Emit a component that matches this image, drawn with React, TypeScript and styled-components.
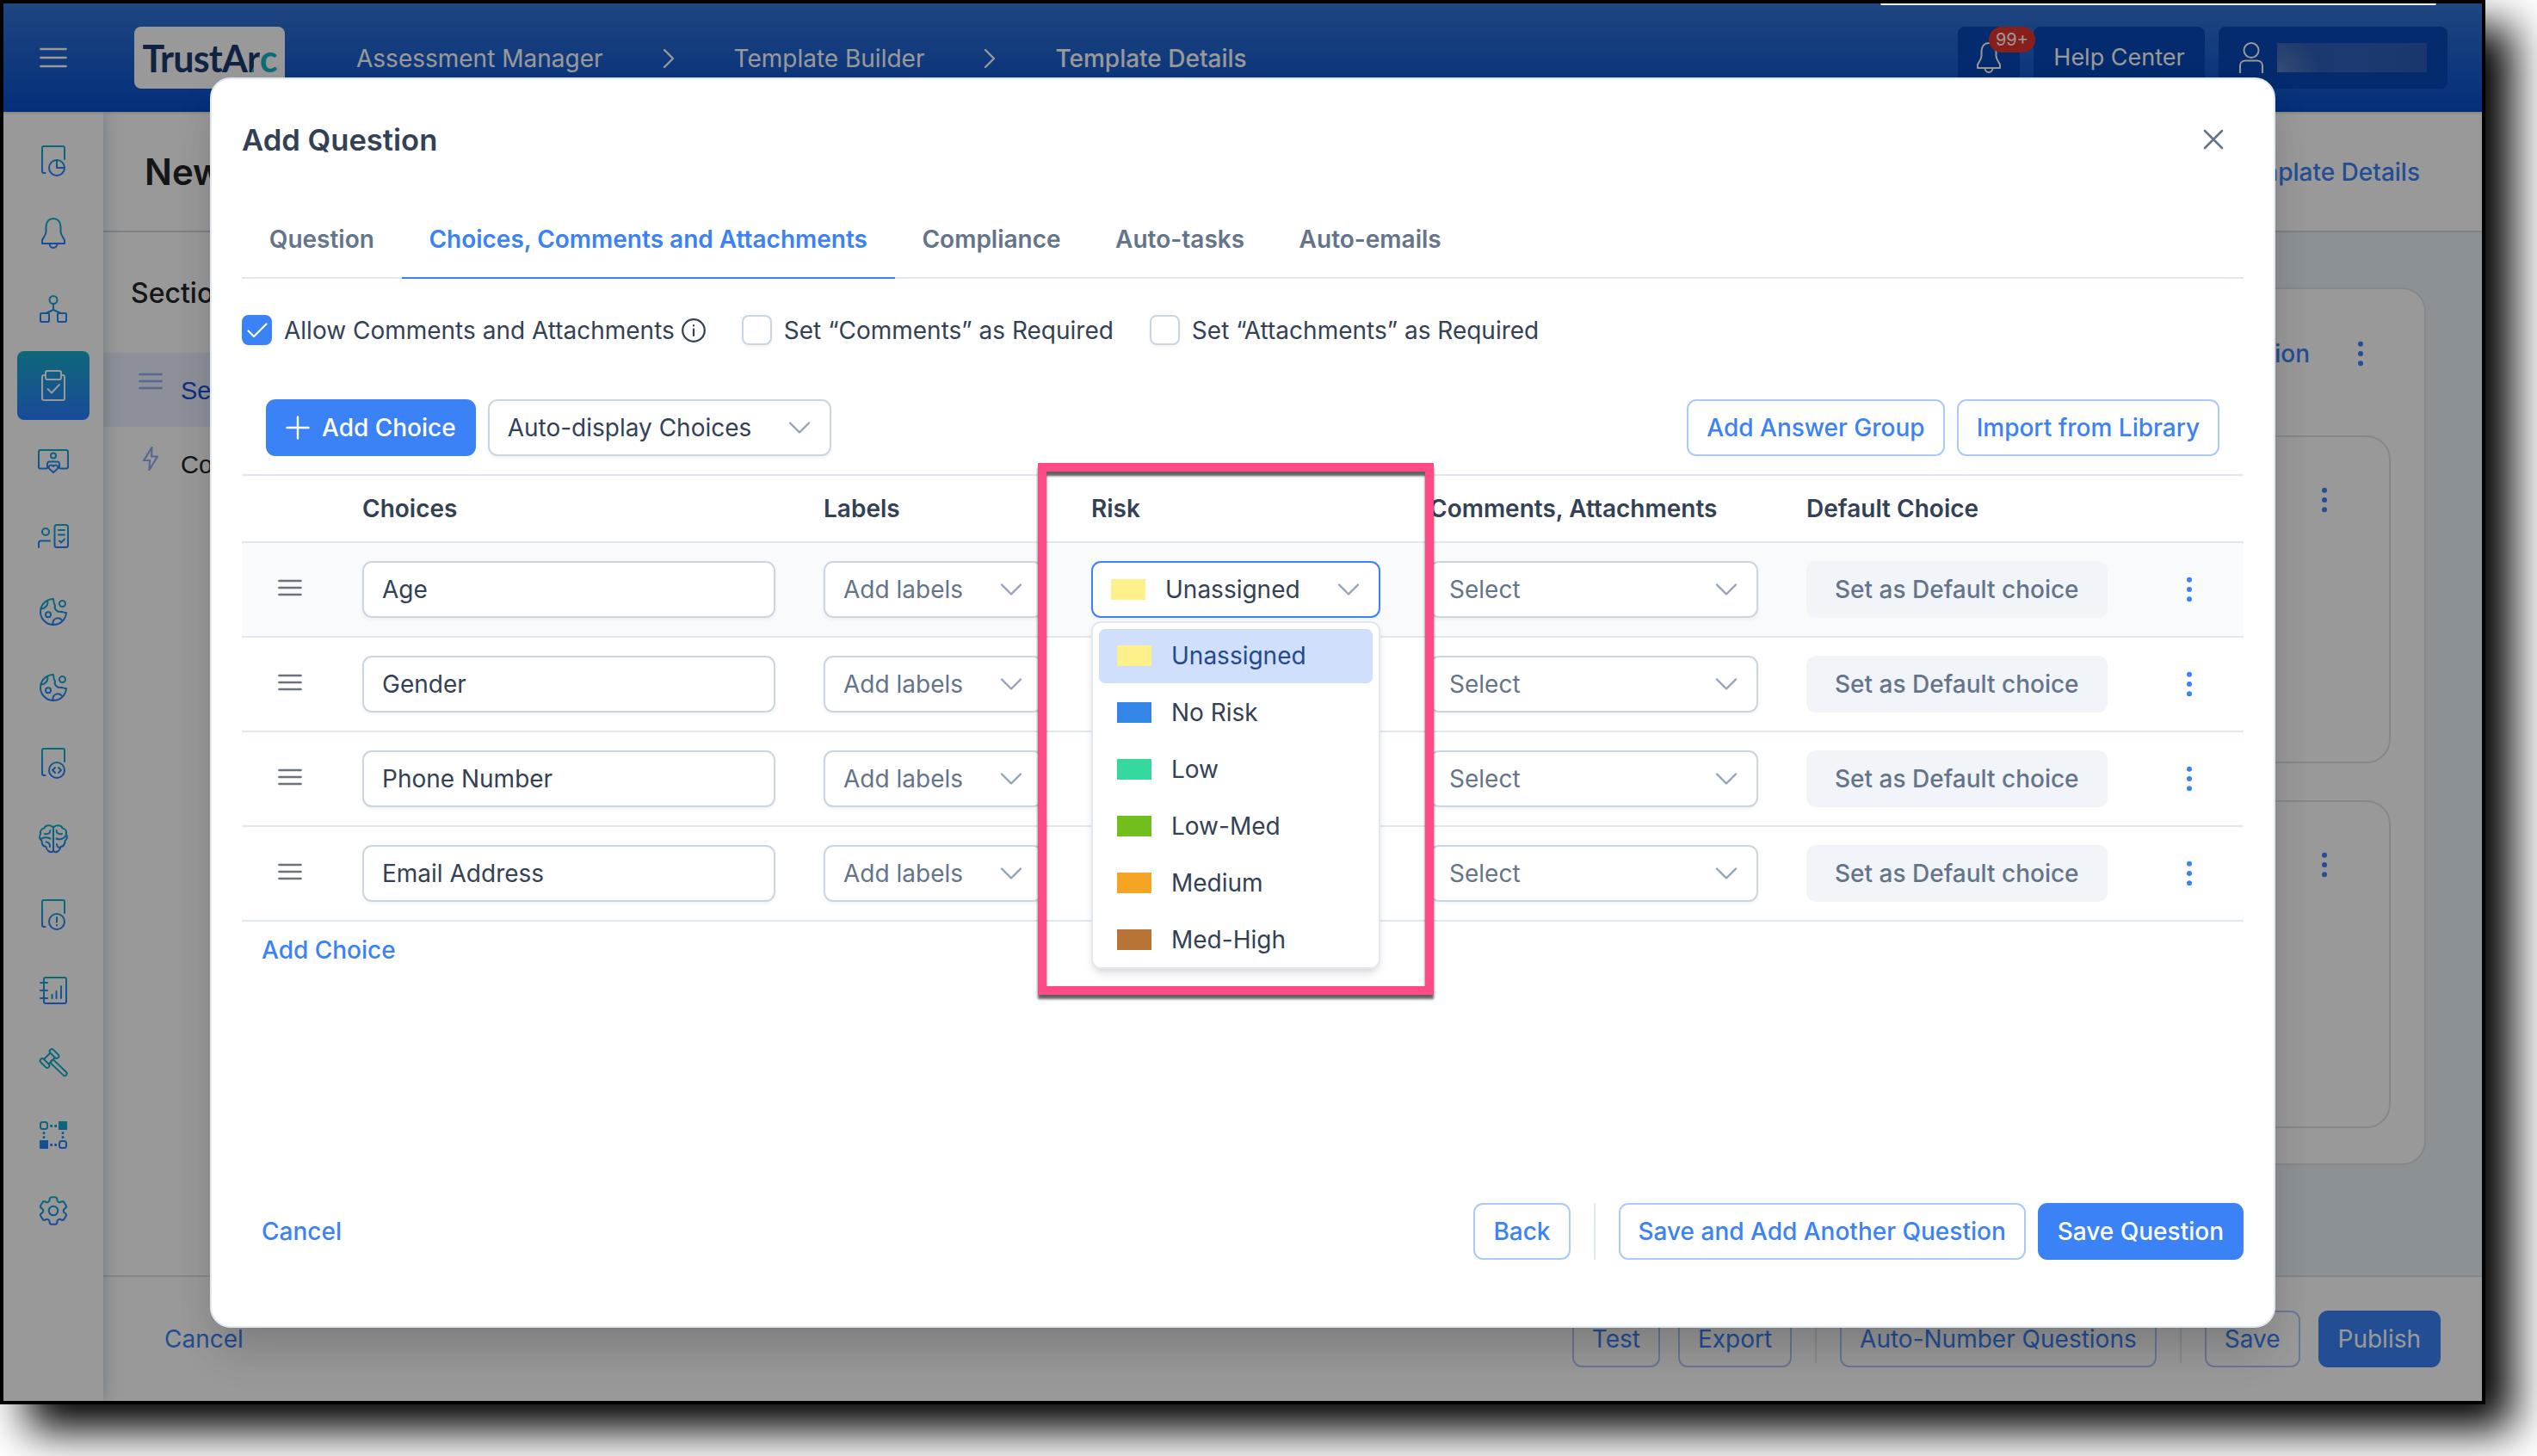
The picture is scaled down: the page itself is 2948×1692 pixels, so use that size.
import React, { useState } from "react";
import styled, { createGlobalStyle, css } from "styled-components";
import { HiOutlineCog6Tooth } from "react-icons/hi2";

const GlobalStyle = createGlobalStyle`
  * {
    box-sizing: border-box;
  }

  body {
    margin: 0;
    min-height: 1692px;
    background: #fff;
    font-family: "Inter", "Liberation Sans", sans-serif;
    font-size: 28px;
    line-height: 34px;
    color: #334155;
  }

  button {
    font: inherit;
    margin: 0;
    cursor: pointer;
  }
`;

// Window frame
const Window = styled.div`
  position: relative;
  width: 2888px;
  height: 1632px;
  border: 4px solid #000;
  box-shadow: 32px 30px 48px #000;
`;

const Shell = styled.div`
  display: flex;
  flex-direction: column;
  height: 100%;
  overflow: hidden;
  background: #fff;
`;

const TabEdge = styled.div`
  position: absolute;
  z-index: 4;
  top: 0;
  left: 2181px;
  width: 646px;
  height: 2px;
  background: #f4f6f8;
  border-radius: 0 0 12px 12px;
`;

// Top bar
const TopBar = styled.header`
  position: relative;
  z-index: 2;
  display: flex;
  align-items: center;
  flex: none;
  height: 126px;
  padding: 0 40px 0 42px;
  background: linear-gradient(#3475d6, #074ecb);
  color: #fff;
  box-shadow: 0 2px 2px rgba(0, 0, 0, 0.12);
`;

const Logo = styled.div`
  display: flex;
  justify-content: center;
  align-items: center;
  width: 175px;
  height: 72px;
  margin-left: 78px;
  padding-top: 2px;
  border-radius: 8px;
  background: #fff;
  color: #1b3b70;
  font-family: "Lato", "Noto Sans", sans-serif;
  font-size: 43px;
  font-weight: 700;
  line-height: 50px;
  letter-spacing: -0.8px;
`;

const LogoR = styled.span`
  background: linear-gradient(115deg, #1b3b70 62%, #14b4c4 63%);
  background-clip: text;
  color: transparent;
`;

const LogoC = styled.span`
  color: #14b4c4;
`;

const Breadcrumb = styled.nav`
  display: flex;
  align-items: center;
  margin-left: 83px;
  padding-top: 1px;
`;

const Spacer = styled.span`
  display: flex;
  justify-content: center;
  width: 152px;
`;

const Crumb = styled.span<{ $current?: boolean }>`
  font-weight: ${(p) => (p.$current ? 500 : 400)};
`;

const TopActions = styled.div`
  display: flex;
  gap: 16px;
  margin-left: auto;
`;

const TopButton = styled.div<{ $width: number }>`
  position: relative;
  display: flex;
  align-items: center;
  justify-content: center;
  width: ${(p) => p.$width}px;
  height: 72px;
  border-radius: 8px;
  background: #0648b6;
  font-size: 27px;
`;

const UserButton = styled(TopButton)`
  padding-right: 4px;
`;

const Badge = styled.span`
  position: absolute;
  top: 0;
  left: 36px;
  z-index: 1;
  width: 54px;
  height: 30px;
  border-radius: 15px;
  background: #e5342c;
  font-size: 20px;
  line-height: 30px;
  text-align: center;
`;

const Redacted = styled.div`
  width: 174px;
  height: 34px;
  margin-left: 12px;
  background:
    radial-gradient(circle at 0 100%, rgba(255, 255, 255, 0.22), transparent 50px),
    linear-gradient(90deg, #2a5cb4, #2f62bd 50%, #2a5cb4);
`;

// Page body
const Body = styled.div`
  display: flex;
  flex: 1;
  min-height: 0;
`;

const Sidebar = styled.aside`
  position: relative;
  z-index: 1;
  display: flex;
  flex-direction: column;
  align-items: center;
  flex: none;
  width: 116px;
  padding-top: 9px;
  background: #fff;
  box-shadow: 0 0 20px rgba(60, 100, 130, 0.35);
`;

const NavItem = styled.div<{ $active?: boolean; $gap?: number }>`
  display: flex;
  align-items: center;
  justify-content: center;
  flex: none;
  width: 84px;
  height: 80px;
  margin-top: ${(p) => p.$gap ?? 8}px;
  border-radius: 8px;
  background: ${(p) => (p.$active ? "linear-gradient(#19accb, #2b7dff)" : "none")};
`;

const Main = styled.main`
  display: flex;
  flex-direction: column;
  flex: 1;
  min-width: 0;
`;

const PageHead = styled.div`
  display: flex;
  align-items: center;
  justify-content: space-between;
  flex: none;
  height: 140px;
  padding: 2px 72px 0 48px;
  border-bottom: 2px solid #d4d6de;
`;

const PageTitle = styled.h1`
  margin: 0;
  font-size: 42px;
  font-weight: 600;
  line-height: 50px;
  color: #222529;
`;

const PageLink = styled.a`
  font-weight: 500;
  color: #3b82f6;
`;

const Content = styled.div`
  display: flex;
  flex: 1;
  min-height: 0;
`;

const SectionPanel = styled.div`
  flex: none;
  width: 600px;
`;

const SectionTitle = styled.div`
  height: 140px;
  padding: 54px 32px 0;
  font-size: 32px;
  font-weight: 500;
  color: #222529;
`;

const SectionRow = styled.div<{ $active?: boolean }>`
  display: flex;
  height: 86px;
  padding: 23px 41px 0;
  background: ${(p) => (p.$active ? "#ebf1fd" : "none")};
  color: ${(p) => (p.$active ? "#1d4ed8" : "#222529")};
  font-family: "Liberation Sans", sans-serif;
  font-size: 29px;
  line-height: 42px;
`;

const SectionIcon = styled.span`
  width: 49px;
  line-height: 0;
`;

const Canvas = styled.div`
  flex: 1;
  padding: 64px 65px 129px 0;
  background: #e8f2f8;
`;

const Card = styled.div`
  height: 1020px;
  padding: 0 39px;
  border: 2px solid #dde3ea;
  border-radius: 28px;
  background: #fff;
`;

const CardHead = styled.div`
  display: flex;
  justify-content: flex-end;
  align-items: center;
  gap: 45px;
  height: 150px;
  margin-bottom: 20px;
  padding-right: 21px;
`;

const InnerCard = styled.div`
  display: flex;
  justify-content: flex-end;
  height: 381px;
  margin-bottom: 43px;
  padding: 58px 61px 0;
  border: 2px solid #dde3ea;
  border-radius: 28px;
`;

const PageFooter = styled.footer`
  display: flex;
  align-items: center;
  flex: none;
  height: 146px;
  padding: 0 48px;
  border-top: 2px solid #dfdfe0;
`;

// Buttons
const Button = styled.button<{ $kind?: "solid" | "outline" | "text" | "muted"; $light?: boolean }>`
  display: inline-flex;
  align-items: center;
  gap: 14px;
  height: 66px;
  padding: 0 21px;
  border: 2px solid transparent;
  border-radius: 11px;
  background: transparent;
  color: #3b82f6;
  font-weight: ${(p) => (p.$light ? 400 : 500)};
  white-space: nowrap;

  ${(p) =>
    p.$kind === "solid" &&
    css`
      background: #3b82f6;
      border-color: #3b82f6;
      color: #fff;
    `}

  ${(p) =>
    p.$kind === "outline" &&
    css`
      border-color: #abc9fb;
    `}

  ${(p) =>
    p.$kind === "muted" &&
    css`
      padding: 0 31px;
      background: #f1f5f9;
      border-color: #f1f5f9;
      color: #64748b;
    `}
`;

const ButtonGroup = styled.div<{ $gap: number }>`
  display: flex;
  align-items: center;
  gap: ${(p) => p.$gap}px;
  margin-left: auto;
`;

const Divider = styled.span<{ $space: number; $height: number }>`
  align-self: flex-start;
  width: 2px;
  height: ${(p) => p.$height}px;
  margin: 0 ${(p) => p.$space}px;
  background: #e2e8f0;
`;

// Modal
const Overlay = styled.div`
  position: absolute;
  inset: 0;
  z-index: 3;
  display: flex;
  justify-content: center;
  align-items: flex-start;
  padding-top: 86px;
  background: rgba(0, 0, 0, 0.4);
`;

const Modal = styled.section`
  display: flex;
  flex-direction: column;
  width: 2400px;
  height: 1453px;
  padding: 35px 35px 77px;
  border: 2px solid #e2e8f0;
  border-radius: 24px;
  background: #fff;
  box-shadow:
    0 40px 50px -10px rgba(0, 0, 0, 0.1),
    0 16px 50px -8px rgba(0, 0, 0, 0.12);
`;

const ModalHead = styled.div`
  display: flex;
  justify-content: space-between;
  align-items: center;
  height: 70px;
  padding-right: 21px;
`;

const ModalTitle = styled.h2`
  margin: 0;
  font-size: 34.6px;
  font-weight: 600;
  line-height: 42px;
`;

const Tabs = styled.div`
  display: flex;
  height: 92px;
  margin-top: 35px;
  border-bottom: 2px solid #e2e8f0;
`;

const Tab = styled.button<{ $active?: boolean }>`
  height: 92px;
  padding: 1px 31.75px 0;
  border: 0;
  border-bottom: 2px solid ${(p) => (p.$active ? "#3b82f6" : "transparent")};
  background: none;
  color: ${(p) => (p.$active ? "#3b82f6" : "#64748b")};
  font-weight: 600;
  white-space: nowrap;
`;

const Options = styled.div`
  display: flex;
  align-items: center;
  gap: 42px;
  height: 35px;
  margin-top: 42px;
`;

const Option = styled.label`
  display: flex;
  align-items: center;
`;

const CheckBox = styled.span<{ $checked?: boolean }>`
  display: flex;
  align-items: center;
  justify-content: center;
  width: 35px;
  height: 35px;
  margin-right: 14px;
  border: 2px solid ${(p) => (p.$checked ? "#3b82f6" : "#cbd5e1")};
  border-radius: 8px;
  background: ${(p) => (p.$checked ? "#3b82f6" : "#fff")};
  box-shadow: 0 2px 4px rgba(18, 18, 23, 0.05);
`;

const InfoSlot = styled.span`
  margin-left: 8px;
  line-height: 0;
`;

const Toolbar = styled.div`
  display: flex;
  gap: 14px;
  height: 66px;
  margin: 63px 28px 21px;
`;

const Field = styled.div<{ $width: number; $focus?: boolean; $muted?: boolean }>`
  display: flex;
  align-items: center;
  width: ${(p) => p.$width}px;
  height: 66px;
  padding: 0 21px;
  border: 2px solid ${(p) => (p.$focus ? "#3b82f6" : "#cbd5e1")};
  border-radius: 11px;
  background: #fff;
  box-shadow: 0 2px 4px rgba(18, 18, 23, 0.05);
  color: ${(p) => (p.$muted ? "#64748b" : "#334155")};

  svg {
    margin-left: auto;
  }
`;

const Table = styled.div`
  border-top: 2px solid #e2e8f0;
`;

const Row = styled.div<{ $header?: boolean; $striped?: boolean }>`
  display: grid;
  grid-template-columns: 112px 536px 311px 393px 438px 405px 131px;
  align-items: center;
  height: ${(p) => (p.$header ? 78 : 110)}px;
  border-bottom: 2px solid #e2e8f0;
  background: ${(p) => (p.$striped ? "#f8fafc" : "#fff")};
  font-weight: ${(p) => (p.$header ? 600 : 400)};
`;

const Cell = styled.div`
  position: relative;
  padding-left: 28px;
  white-space: nowrap;
`;

const HandleCell = styled.div`
  display: flex;
  padding: 0 0 4px 42px;
`;

const KebabCell = styled.div`
  display: flex;
  padding-left: 54px;
`;

const Swatch = styled.span<{ $color: string }>`
  width: 40px;
  height: 24px;
  margin-right: 23px;
  background: ${(p) => p.$color};
`;

const RiskMenu = styled.div`
  position: absolute;
  z-index: 5;
  top: 70px;
  left: 28px;
  display: flex;
  flex-direction: column;
  gap: 3.5px;
  width: 336px;
  height: 404px;
  padding: 7px;
  overflow: hidden;
  border: 2px solid #e2e8f0;
  border-radius: 11px;
  background: #fff;
  box-shadow:
    0 8px 12px -2px rgba(0, 0, 0, 0.1),
    0 4px 8px -4px rgba(0, 0, 0, 0.1);
`;

const RiskItem = styled.div<{ $selected?: boolean }>`
  display: flex;
  align-items: center;
  flex: none;
  height: 62.5px;
  padding: 0 21px;
  border-radius: 7px;
  background: ${(p) => (p.$selected ? "#d0dffc" : "none")};
  color: ${(p) => (p.$selected ? "#244a8c" : "#334155")};
`;

const AddLink = styled.div`
  display: flex;
`;

const ModalFooter = styled.div`
  display: flex;
  height: 66px;
  margin-top: auto;
`;

// Callout around the Risk column
const Highlight = styled.div`
  position: absolute;
  z-index: 6;
  left: 1202px;
  top: 534px;
  width: 460px;
  height: 618px;
  border: 10px solid #ff4a88;
  filter: drop-shadow(0 5px 1.5px rgba(0, 0, 0, 0.62));
`;

const LineIcon = styled.svg.attrs({ viewBox: "0 0 36 36", fill: "none" })`
  flex: none;
  width: 36px;
  height: 36px;
  stroke: url(#navGradient);
  stroke-width: 2;
  stroke-linecap: round;
  stroke-linejoin: round;

  .solid {
    fill: url(#navGradient);
    stroke: none;
  }
`;

const WhiteIcon = styled(LineIcon)`
  stroke: #fff;
`;

const CogIcon = styled(HiOutlineCog6Tooth)`
  width: 42px;
  height: 42px;
  stroke: url(#cogGradient);

  path {
    stroke-width: 1.2;
  }
`;

const Defs = styled.svg`
  position: absolute;
  width: 0;
  height: 0;
`;

const Gradients = () => (
  <Defs>
    <defs>
      <linearGradient id="navGradient" gradientUnits="userSpaceOnUse" x1="0" y1="2" x2="0" y2="34">
        <stop offset="0" stopColor="#12b0c8" />
        <stop offset="1" stopColor="#2b7dff" />
      </linearGradient>
      <linearGradient id="cogGradient" gradientUnits="userSpaceOnUse" x1="0" y1="3" x2="0" y2="21">
        <stop offset="0" stopColor="#12b0c8" />
        <stop offset="1" stopColor="#2b7dff" />
      </linearGradient>
    </defs>
  </Defs>
);

const ChevronDown = () => (
  <svg width="28" height="28" viewBox="0 0 28 28" fill="none" stroke="#94a3b8" strokeWidth="2.4" strokeLinecap="round" strokeLinejoin="round">
    <path d="M3 8.500 14 19.500 25 8.500" />
  </svg>
);

const ChevronRight = () => (
  <svg width="28" height="28" viewBox="0 0 28 28" fill="none" stroke="#fff" strokeWidth="2.4" strokeLinecap="round" strokeLinejoin="round">
    <path d="M9 4 19 14 9 24" />
  </svg>
);

const Kebab = () => (
  <svg width="28" height="30" viewBox="0 0 28 30" fill="#3b82f6">
    <circle cx="14" cy="3.8" r="3" />
    <circle cx="14" cy="15" r="3" />
    <circle cx="14" cy="26.2" r="3" />
  </svg>
);

const Bars = ({ width, gap, color }: { width: number; gap: number; color: string }) => (
  <svg width={width} height={gap * 2 + 4} fill="none" stroke={color} strokeWidth="2.7" strokeLinecap="round">
    <path d={`M1.5 2H${width - 1.5}M1.5 ${gap + 2}H${width - 1.5}M1.5 ${gap * 2 + 2}H${width - 1.5}`} />
  </svg>
);

const bellPath = "M5 30V26L7 22.5C8.6 20 9.5 18.5 9.5 16V10.5C9.5 5 13 1 18 1S26.5 5 26.5 10.5V16C26.5 18.5 27.4 20 29 22.5L31 26V30ZM13.5 30C13.5 33 15.5 35 18 35S22.5 33 22.5 30";
const docPath = "M8.5 32H7A2 2 0 0 1 5 30V3A2 2 0 0 1 7 1H29A2 2 0 0 1 31 3V16";

const cookie = (
  <>
    <path d="M18 3A15 15 0 1 0 33 19C31 19.5 29.5 18.5 28 17.8C23 19 18.5 15.5 20 10.5C18 8.5 18.5 5.5 18 3Z" />
    <circle cx="28.5" cy="8.5" r="3.5" />
    <circle cx="12" cy="21.2" r="3" />
    <path d="M11 5C12.5 9 9.5 14 3.5 14.5M17.5 32.5C16.5 25.5 25 22.5 28.5 28.5" />
  </>
);

const brainHalf = "M17 4C15 1.5 8.5 1.5 7.5 5.5C4 6 2 9 3.3 12C1 15 2 18.5 4.5 20C4.3 24 6.5 26.5 9.5 27C10 31.5 14.5 34.5 17 32.5";

interface NavEntry {
  gap?: number;
  active?: boolean;
  icon: React.ReactNode;
}

const navItems: NavEntry[] = [
  {
    icon: (
      <LineIcon>
        <path d={docPath} />
        <circle cx="22" cy="26" r="9" />
        <path d="M22 17V26H31" />
      </LineIcon>
    ),
  },
  { gap: 4, icon: <LineIcon><path d={bellPath} /></LineIcon> },
  {
    icon: (
      <LineIcon>
        <circle cx="18" cy="7.5" r="4.5" />
        <path d="M18 12V19L9.5 23M18 19L26.5 23" />
        <rect x="3" y="23" width="10" height="10" rx="1" />
        <rect x="23" y="23" width="10" height="10" rx="1" />
      </LineIcon>
    ),
  },
  {
    gap: 9,
    active: true,
    icon: (
      <WhiteIcon>
        <path d="M9 6H7A2 2 0 0 0 5 8V33A2 2 0 0 0 7 35H29A2 2 0 0 0 31 33V8A2 2 0 0 0 29 6H27" />
        <rect x="9" y="1" width="18" height="10" rx="2" />
        <path d="M11.5 22L16 26.5L25 17" />
      </WhiteIcon>
    ),
  },
  {
    gap: 7,
    icon: (
      <LineIcon>
        <path d="M10 27.500H3A2 2 0 0 1 1 25.500V8A2 2 0 0 1 3 6H33A2 2 0 0 1 35 8V25.500A2 2 0 0 1 33 27.500H26" />
        <circle cx="18" cy="12.5" r="3" />
        <path d="M11 27V22A2.5 2.5 0 0 1 13.5 19.5H22.5A2.5 2.5 0 0 1 25 22V27" />
        <path d="M18 32L13.5 28C12 26 13 23.8 15 23.6C16.5 23.5 17.5 24 18 25C18.5 24 19.5 23.5 21 23.6C23 23.8 24 26 22.5 28Z" />
      </LineIcon>
    ),
  },
  {
    icon: (
      <LineIcon>
        <circle cx="9" cy="13" r="4" />
        <path d="M1 31V26A2.5 2.5 0 0 1 3.5 23.5H14" />
        <rect x="19.5" y="5" width="15.5" height="26" rx="2.5" />
        <path d="M24 11H31M24 16.5H31M25 23.5L27 25.5L31 21.5" />
      </LineIcon>
    ),
  },
  { icon: <LineIcon>{cookie}</LineIcon> },
  { icon: <LineIcon>{cookie}</LineIcon> },
  {
    icon: (
      <LineIcon>
        <path d={docPath} />
        <circle cx="22" cy="26" r="9" />
        <path d="M20 23L17 26L20 29M24 23L27 26L24 29" />
      </LineIcon>
    ),
  },
  {
    icon: (
      <LineIcon>
        <path d={brainHalf} />
        <path d={brainHalf} transform="matrix(-1 0 0 1 36 0)" />
        <path d="M18 3.5V33" />
        <path d="M14.5 8C14.5 11.5 11 13 8 12M3.5 18C7 15.5 11 16 14.5 17.5M9.5 21.5C12.5 21.5 14 23.5 14 27" />
        <path d="M21.5 8C21.5 11.5 25 13 28 12M32.5 14C30 18.5 25 19 21.5 17.5M22 24C22 26.5 24 28 25.5 28" />
      </LineIcon>
    ),
  },
  {
    icon: (
      <LineIcon>
        <path d={docPath} />
        <circle cx="22" cy="26" r="9" />
        <path d="M22 21V26.5M22 30V30.5" />
      </LineIcon>
    ),
  },
  {
    icon: (
      <LineIcon>
        <rect x="7" y="3" width="26" height="30" rx="2" />
        <path d="M3 9H11M3 18H11M3 27H11M16.5 23V27M21.5 19V27M27 13V27" />
      </LineIcon>
    ),
  },
  {
    gap: 4,
    icon: (
      <LineIcon>
        <rect x="-6.5" y="-2.5" width="13" height="5" rx="2.5" transform="translate(19 7.5) rotate(45)" />
        <rect x="-6.5" y="-2.5" width="13" height="5" rx="2.5" transform="translate(8 18.5) rotate(45)" />
        <path d="M14.5 6.5L7 14M20 12L12.5 19.5" />
        <rect x="-12" y="-2.5" width="24" height="5" rx="2.5" transform="translate(24.3 24) rotate(44)" />
      </LineIcon>
    ),
  },
  {
    gap: 4,
    icon: (
      <LineIcon>
        <rect x="3" y="3" width="8" height="8" rx="2.5" />
        <rect x="25" y="25" width="8" height="8" rx="2.5" />
        <rect className="solid" x="24" y="2" width="10" height="10" />
        <rect className="solid" x="2" y="24" width="10" height="10" />
        <path className="solid" d="M14.3 6H17V9H14.3ZM19.3 6H22V9H19.3ZM5.7 14.3H8.3V17H5.7ZM5.7 19.3H8.3V22H5.7ZM27.7 14.3H30.3V17H27.7ZM27.7 19.3H30.3V22H27.7ZM14.3 28H17V31H14.3ZM19.3 28H22V31H19.3Z" />
      </LineIcon>
    ),
  },
  { icon: <CogIcon /> },
];

const tabs = ["Question", "Choices, Comments and Attachments", "Compliance", "Auto-tasks", "Auto-emails"];

const choices = ["Age", "Gender", "Phone Number", "Email Address"];

const risks = [
  { label: "Unassigned", color: "#fef08a" },
  { label: "No Risk", color: "#3385e8" },
  { label: "Low", color: "#36d99d" },
  { label: "Low-Med", color: "#71bf1d" },
  { label: "Medium", color: "#f5a524" },
  { label: "Med-High", color: "#b87337" },
];

const App: React.FC = () => {
  const [activeTab, setActiveTab] = useState(1);
  const [risk, setRisk] = useState(0);

  return (
    <>
      <GlobalStyle />
      <Gradients />
      <Window>
        <Shell>
          <TopBar>
            <Bars width={32} gap={10} color="#fff" />
            <Logo>
              <span>TrustA<LogoR>r</LogoR><LogoC>c</LogoC></span>
            </Logo>
            <Breadcrumb>
              <Crumb>Assessment Manager</Crumb>
              <Spacer><ChevronRight /></Spacer>
              <Crumb>Template Builder</Crumb>
              <Spacer><ChevronRight /></Spacer>
              <Crumb $current>Template Details</Crumb>
            </Breadcrumb>
            <TopActions>
              <TopButton $width={72}>
                <WhiteIcon><path d={bellPath} /></WhiteIcon>
                <Badge>99+</Badge>
              </TopButton>
              <TopButton $width={199}>Help Center</TopButton>
              <UserButton $width={266}>
                <WhiteIcon>
                  <circle cx="18" cy="9.5" r="8.5" />
                  <path d="M5 35.5V27A6 6 0 0 1 11 21.5H25A6 6 0 0 1 31 27V35.5" />
                </WhiteIcon>
                <Redacted />
              </UserButton>
            </TopActions>
          </TopBar>

          <Body>
            <Sidebar>
              {navItems.map((item, index) => (
                <NavItem key={index} $active={item.active} $gap={item.gap}>
                  {item.icon}
                </NavItem>
              ))}
            </Sidebar>
            <Main>
              <PageHead>
                <PageTitle>New</PageTitle>
                <PageLink>Template Details</PageLink>
              </PageHead>
              <Content>
                <SectionPanel>
                  <SectionTitle>Section</SectionTitle>
                  <SectionRow $active>
                    <SectionIcon>
                      <Bars width={28} gap={8} color="#8fb0f5" />
                    </SectionIcon>
                    Sec
                  </SectionRow>
                  <SectionRow>
                    <SectionIcon>
                      <svg width="28" height="28" viewBox="0 0 28 28" fill="none" stroke="#8fb0f5" strokeWidth="2.2" strokeLinejoin="round">
                        <path d="M15.5 1L6 16H13L12.5 27L22 11.5H15Z" />
                      </svg>
                    </SectionIcon>
                    Con
                  </SectionRow>
                </SectionPanel>
                <Canvas>
                  <Card>
                    <CardHead>
                      <PageLink>Question</PageLink>
                      <Kebab />
                    </CardHead>
                    <InnerCard><Kebab /></InnerCard>
                    <InnerCard><Kebab /></InnerCard>
                  </Card>
                </Canvas>
              </Content>
              <PageFooter>
                <Button $light>Cancel</Button>
                <ButtonGroup $gap={21}>
                  <Button $kind="outline" $light>Test</Button>
                  <Button $kind="outline" $light>Export</Button>
                  <Divider $space={6} $height={61} />
                  <Button $kind="outline" $light>Auto-Number Questions</Button>
                  <Divider $space={6} $height={61} />
                  <Button $kind="outline" $light>Save</Button>
                  <Button $kind="solid" $light>Publish</Button>
                </ButtonGroup>
              </PageFooter>
            </Main>
          </Body>
        </Shell>

        <Overlay>
          <Modal>
            <ModalHead>
              <ModalTitle>Add Question</ModalTitle>
              <svg width="28" height="28" viewBox="0 0 28 28" stroke="#64748b" strokeWidth="2.6" strokeLinecap="round">
                <path d="M4 4L24 24M24 4L4 24" />
              </svg>
            </ModalHead>

            <Tabs>
              {tabs.map((tab, index) => (
                <Tab key={tab} $active={index === activeTab} onClick={() => setActiveTab(index)}>
                  {tab}
                </Tab>
              ))}
            </Tabs>

            <Options>
              <Option>
                <CheckBox $checked>
                  <svg width="26" height="26" viewBox="0 0 26 26" fill="none" stroke="#fff" strokeWidth="2.2" strokeLinecap="round" strokeLinejoin="round">
                    <path d="M2.5 13.5L9 20L23.5 5.5" />
                  </svg>
                </CheckBox>
                Allow Comments and Attachments
                <InfoSlot>
                  <svg width="28" height="28" viewBox="0 0 28 28" fill="none" stroke="#334155" strokeWidth="2.2" strokeLinecap="round">
                    <circle cx="14" cy="14" r="12.8" />
                    <path d="M14 12.5V20M14 8V8.4" />
                  </svg>
                </InfoSlot>
              </Option>
              <Option>
                <CheckBox />
                Set “Comments” as Required
              </Option>
              <Option>
                <CheckBox />
                Set “Attachments” as Required
              </Option>
            </Options>

            <Toolbar>
              <Button $kind="solid">
                <svg width="28" height="28" viewBox="0 0 28 28" stroke="#fff" strokeWidth="2.4" strokeLinecap="round">
                  <path d="M14 1.5V26.5M1.5 14H26.5" />
                </svg>
                Add Choice
              </Button>
              <Field $width={399}>
                Auto-display Choices
                <ChevronDown />
              </Field>
              <ButtonGroup $gap={14}>
                <Button $kind="outline">Add Answer Group</Button>
                <Button $kind="outline">Import from Library</Button>
              </ButtonGroup>
            </Toolbar>

            <Table>
              <Row $header>
                <Cell />
                <Cell>Choices</Cell>
                <Cell>Labels</Cell>
                <Cell>Risk</Cell>
                <Cell>Comments, Attachments</Cell>
                <Cell>Default Choice</Cell>
                <Cell />
              </Row>
              {choices.map((choice, index) => (
                <Row key={choice} $striped={index === 0}>
                  <HandleCell>
                    <Bars width={28} gap={8} color="#6b7280" />
                  </HandleCell>
                  <Cell>
                    <Field $width={480}>{choice}</Field>
                  </Cell>
                  <Cell>
                    <Field $width={255} $muted>
                      Add labels
                      <ChevronDown />
                    </Field>
                  </Cell>
                  <Cell>
                    {index === 0 && (
                      <>
                        <Field $width={336} $focus>
                          <Swatch $color={risks[risk].color} />
                          {risks[risk].label}
                          <ChevronDown />
                        </Field>
                        <RiskMenu>
                          {risks.map((item, i) => (
                            <RiskItem key={item.label} $selected={i === risk} onClick={() => setRisk(i)}>
                              <Swatch $color={item.color} />
                              {item.label}
                            </RiskItem>
                          ))}
                        </RiskMenu>
                      </>
                    )}
                  </Cell>
                  <Cell>
                    <Field $width={382} $muted>
                      Select
                      <ChevronDown />
                    </Field>
                  </Cell>
                  <Cell>
                    <Button $kind="muted">Set as Default choice</Button>
                  </Cell>
                  <KebabCell>
                    <Kebab />
                  </KebabCell>
                </Row>
              ))}
            </Table>
            <AddLink>
              <Button>Add Choice</Button>
            </AddLink>

            <ModalFooter>
              <Button>Cancel</Button>
              <ButtonGroup $gap={14}>
                <Button $kind="outline">Back</Button>
                <Divider $space={13} $height={66} />
                <Button $kind="outline">Save and Add Another Question</Button>
                <Button $kind="solid">Save Question</Button>
              </ButtonGroup>
            </ModalFooter>
          </Modal>
        </Overlay>

        <TabEdge />
        <Highlight />
      </Window>
    </>
  );
};

export default App;
